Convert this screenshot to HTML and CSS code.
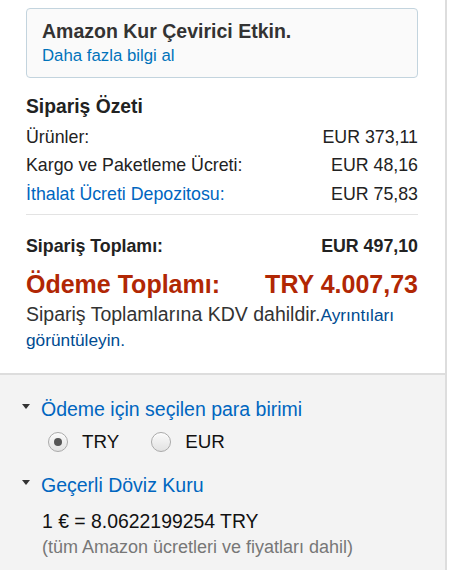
FILE: index.html
```html
<!DOCTYPE html>
<html lang="tr">
<head>
<meta charset="utf-8">
<title>Sipariş Özeti</title>
<link rel="stylesheet" href="styles.css">
</head>
<body>
<div class="panel">
  <div class="top">
    <div class="info-box">
      <div class="info-title">Amazon Kur Çevirici Etkin.</div>
      <div class="info-link"><a href="#">Daha fazla bilgi al</a></div>
    </div>
    <div class="summary-title">Sipariş Özeti</div>
    <div class="row"><span>Ürünler:</span><span>EUR 373,11</span></div>
    <div class="row"><span>Kargo ve Paketleme Ücreti:</span><span>EUR 48,16</span></div>
    <div class="row"><a href="#">İthalat Ücreti Depozitosu:</a><span>EUR 75,83</span></div>
    <div class="divider"></div>
    <div class="row total"><span>Sipariş Toplamı:</span><span>EUR 497,10</span></div>
    <div class="row grand"><span>Ödeme Toplamı:</span><span>TRY 4.007,73</span></div>
    <p class="vat">Sipariş Toplamlarına KDV dahildir.<a href="#">Ayrıntıları görüntüleyin.</a></p>
  </div>
  <div class="bottom">
    <div class="expander"><span class="caret"></span><a href="#">Ödeme için seçilen para birimi</a></div>
    <div class="radios">
      <label class="radio"><span class="dot checked"></span>TRY</label>
      <label class="radio"><span class="dot"></span>EUR</label>
    </div>
    <div class="expander"><span class="caret"></span><a href="#">Geçerli Döviz Kuru</a></div>
    <div class="rate">1 € = 8.0622199254 TRY</div>
    <div class="note">(tüm Amazon ücretleri ve fiyatları dahil)</div>
  </div>
</div>
</body>
</html>
```

FILE: styles.css
```css
html, body {
  margin: 0;
  padding: 0;
  background: #fff;
}
body {
  font-family: "Liberation Sans", Arial, sans-serif;
  color: #111;
  width: 450px;
  height: 570px;
  overflow: hidden;
}
a {
  color: #0066c0;
  text-decoration: none;
}
.panel {
  width: 445px;
  height: 570px;
  border-right: 2px solid #dddddd;
  display: flex;
  flex-direction: column;
}
.top {
  padding: 8px 27px 21px 26px;
  border-bottom: 2px solid #dddddd;
}
.info-box {
  height: 68px;
  border: 1px solid #c3d4de;
  border-radius: 4px;
  background: #fafafa;
  padding: 0 15px;
  box-sizing: content-box;
}
.info-title {
  font-size: 19.5px;
  font-weight: bold;
  color: #333;
  line-height: 24px;
  margin-top: 10px;
}
.info-link {
  font-size: 16.8px;
  line-height: 24px;
  margin-top: 1px;
}
.info-link a {
  color: #0073bb;
}
.summary-title {
  font-size: 19.3px;
  font-weight: bold;
  color: #222;
  line-height: 24px;
  margin-top: 17px;
  margin-bottom: 4px;
}
.row {
  display: flex;
  justify-content: space-between;
  font-size: 17.8px;
  line-height: 28.3px;
  color: #222;
}
.divider {
  height: 1px;
  background: #e3e3e3;
  margin: 6px 0 19px;
}
.row.total {
  font-size: 17.8px;
  font-weight: bold;
  line-height: 24px;
  color: #222;
}
.row.grand {
  font-size: 25px;
  font-weight: bold;
  line-height: 30px;
  color: #b12704;
  margin-top: 11px;
}
.vat {
  margin: 3px 0 0;
  font-size: 19.5px;
  line-height: 24px;
  color: #333;
  width: 372px;
}
.vat a {
  font-size: 17.3px;
  color: #004b91;
}
.bottom {
  flex: 1;
  background: #f3f3f3;
  padding: 22px 20px 0 21px;
}
.expander {
  display: flex;
  align-items: center;
  font-size: 19.5px;
  line-height: 24px;
}
.caret {
  width: 0;
  height: 0;
  border-left: 4.5px solid transparent;
  border-right: 4.5px solid transparent;
  border-top: 5px solid #333;
  margin-left: 1px;
  margin-right: 11px;
  margin-top: -4px;
}
.expander a {
  color: #0066c0;
}
.radios {
  display: flex;
  align-items: center;
  margin: 7px 0 17px 27px;
  height: 28px;
}
.radio {
  display: flex;
  align-items: center;
  font-size: 18.8px;
  color: #111;
  margin-right: 32px;
}
.dot {
  width: 18px;
  height: 18px;
  border-radius: 50%;
  border: 1px solid #aaa;
  background: linear-gradient(#fafafa, #e2e2e2);
  margin-right: 14px;
  display: flex;
  align-items: center;
  justify-content: center;
  box-shadow: inset 0 1px 1px rgba(255,255,255,0.8);
}
.dot.checked::after {
  content: "";
  width: 8px;
  height: 8px;
  border-radius: 50%;
  background: #555;
}
.rate {
  font-size: 19.4px;
  line-height: 24px;
  color: #111;
  margin: 12px 0 0 21px;
}
.note {
  font-size: 18px;
  line-height: 24px;
  color: #777;
  margin: 2px 0 0 21px;
}
```
